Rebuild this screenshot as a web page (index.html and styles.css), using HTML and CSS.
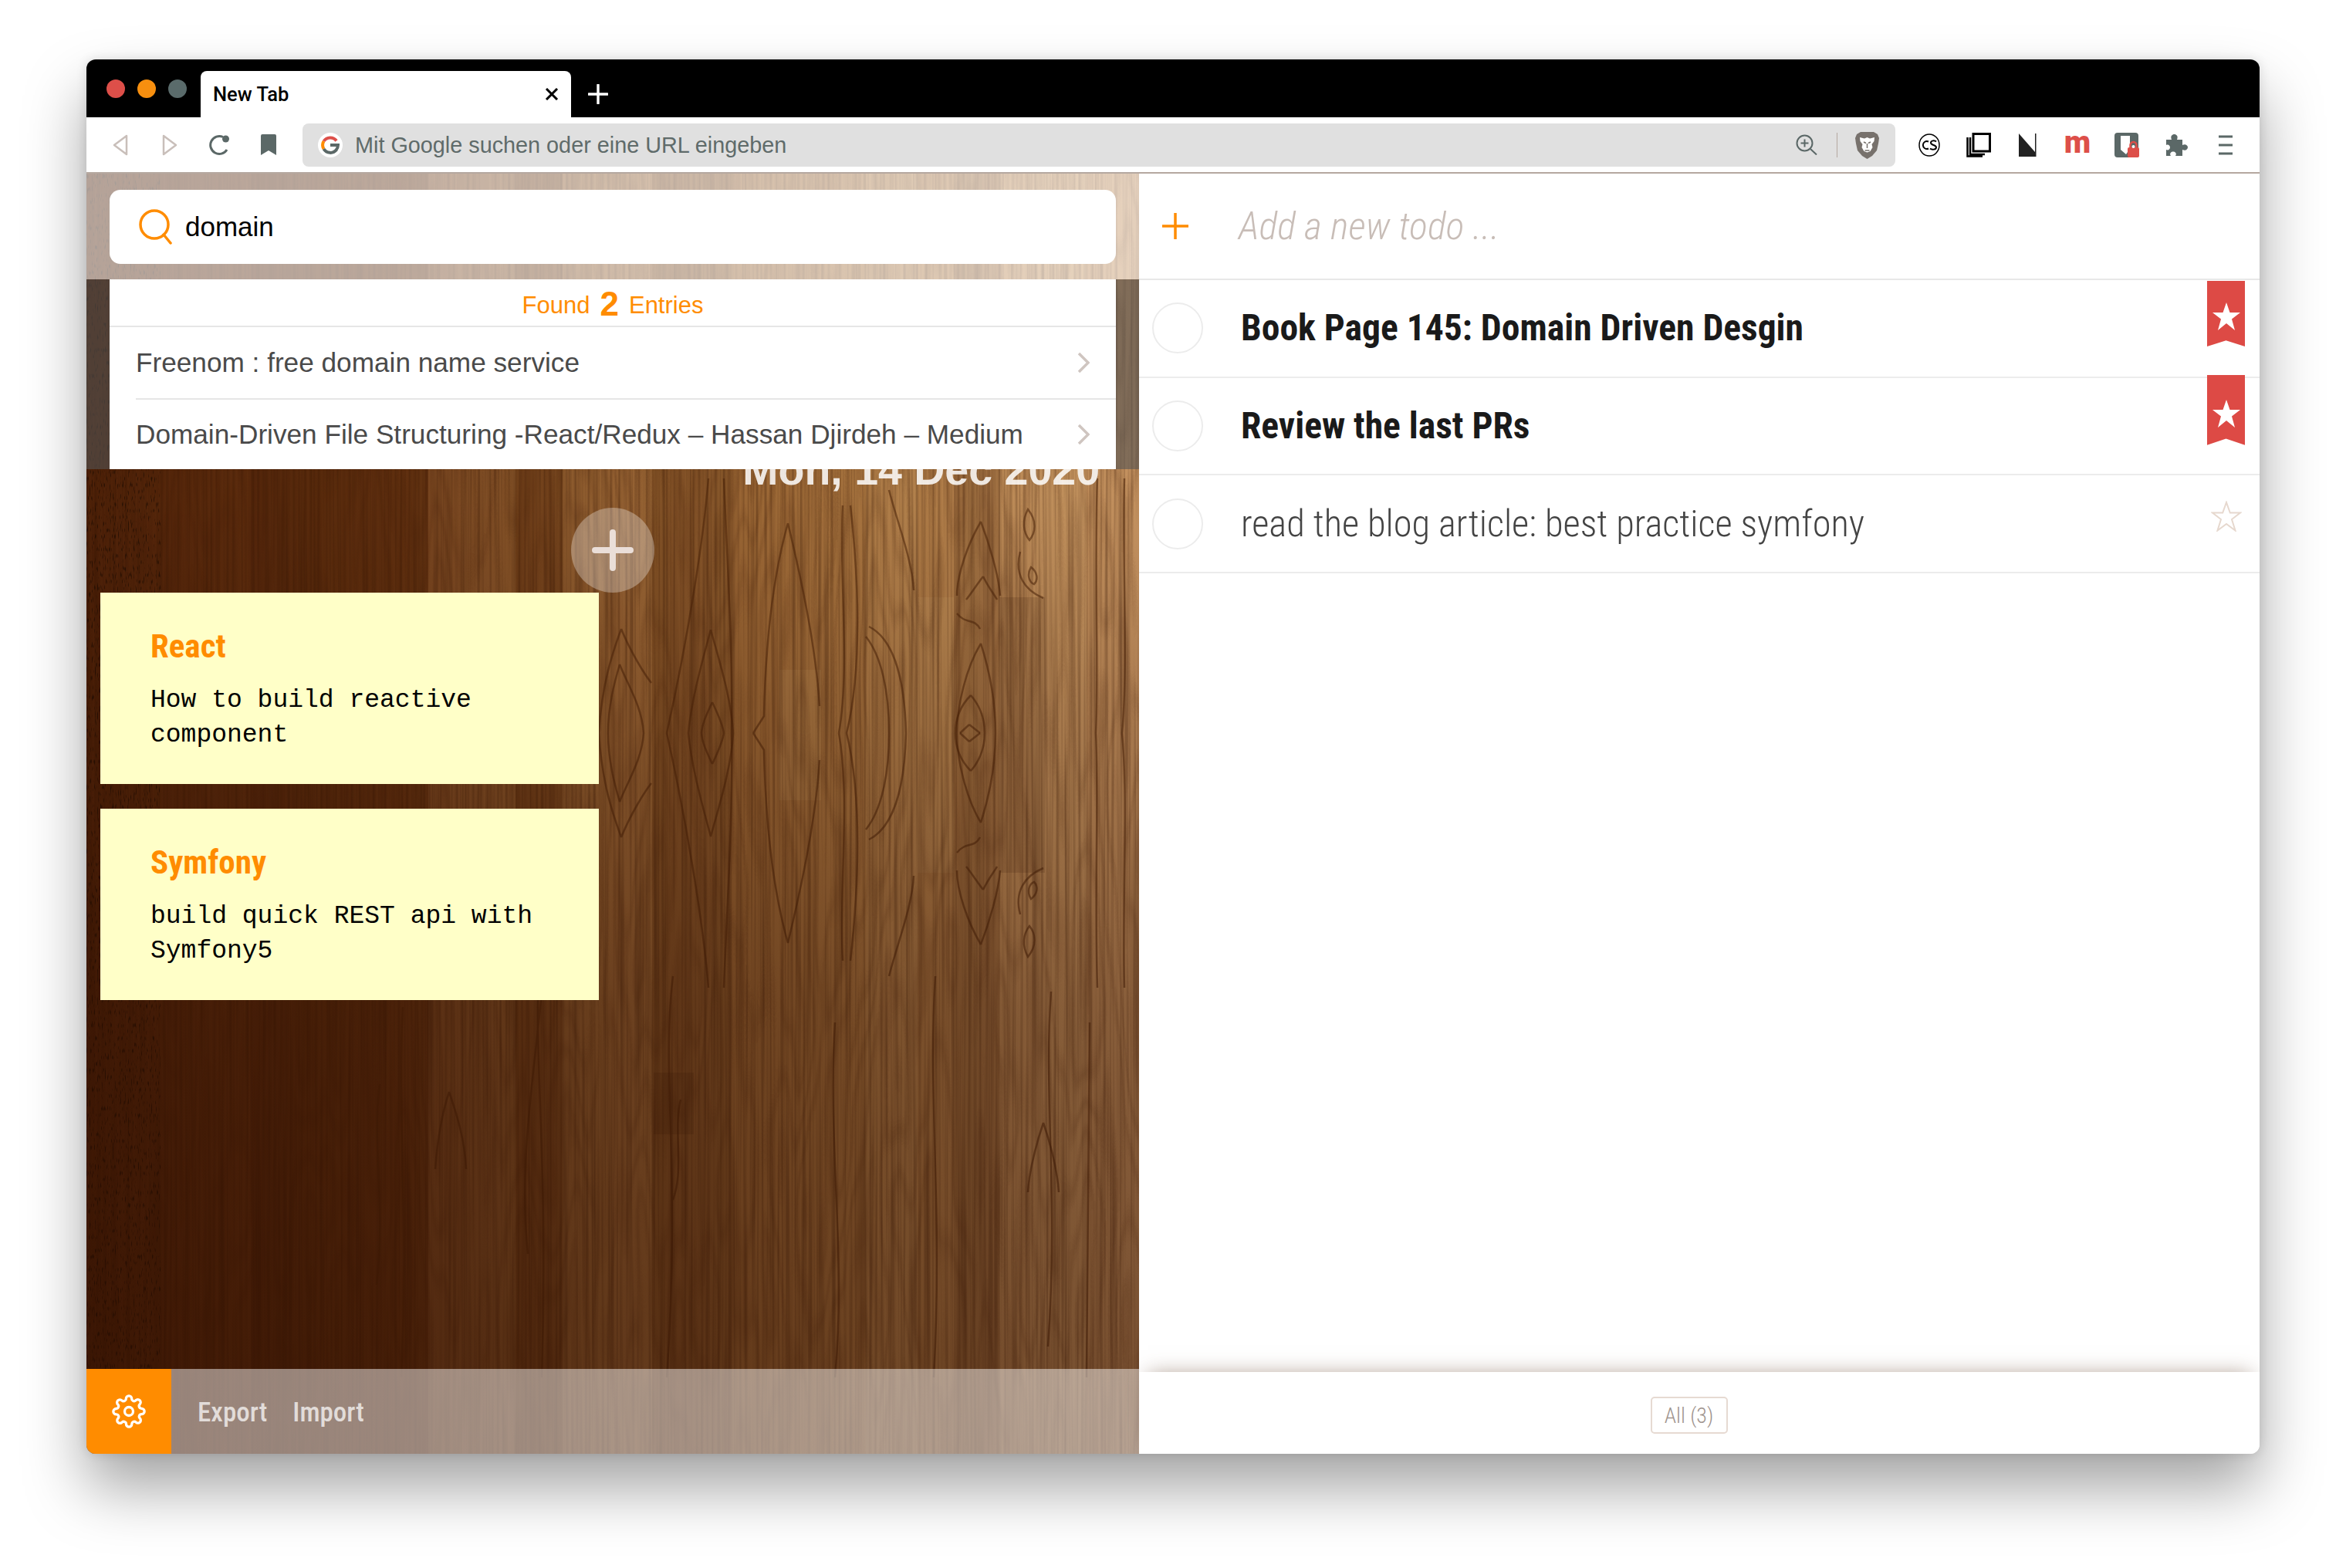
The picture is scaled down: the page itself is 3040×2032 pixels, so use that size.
FILE: index.html
```html
<!DOCTYPE html>
<html lang="en">
<head>
  <meta charset="UTF-8" />
  <title>New Tab</title>
  <link rel="stylesheet" href="styles.css">
</head>
<body>
  <div class="window">
    <div class="titlebar">
      <span class="light light-red"></span>
      <span class="light light-orange"></span>
      <span class="light light-gray"></span>
      <div class="tab">
        <span class="tab-title">New Tab</span>
        <svg class="tab-close" viewBox="0 0 18 16"><path d="M2 1l14 14M16 1L2 15" stroke="#000" stroke-width="3" fill="none"/></svg>
      </div>
      <svg class="tab-new" viewBox="0 0 26 26"><path d="M13 1v24M1 13h24" stroke="#fff" stroke-width="3.4" stroke-linecap="round" fill="none"/></svg>
    </div>

    <div class="toolbar">
      <div class="tool"><svg width="20" height="28" viewBox="0 0 20 28"><path d="M18 2L2 14l16 12z" fill="none" stroke="#c9bfba" stroke-width="2.5" stroke-linejoin="round"/></svg></div>
      <div class="tool"><svg width="20" height="28" viewBox="0 0 20 28"><path d="M2 2l16 12L2 26z" fill="none" stroke="#c9bfba" stroke-width="2.5" stroke-linejoin="round"/></svg></div>
      <div class="tool"><svg width="28" height="27" viewBox="0 0 28 27"><path d="M19 3.5A11.5 11.5 0 1 0 24 20" fill="none" stroke="#5b6867" stroke-width="3"/><circle cx="22.5" cy="6" r="4.5" fill="#5b6867"/></svg></div>
      <div class="tool"><svg width="20" height="27" viewBox="0 0 20 27"><path d="M2 0h16a2 2 0 0 1 2 2v25l-10-6-10 6V2a2 2 0 0 1 2-2z" fill="#5b6867"/></svg></div>

      <div class="urlbar">
        <svg class="g-logo" width="32" height="32" viewBox="0 0 32 32">
          <circle cx="16" cy="16" r="16" fill="#fff"/>
          <path d="M24 10.5A10 10 0 0 0 7.5 11" fill="none" stroke="#dd4f49" stroke-width="4"/>
          <path d="M7.5 11a10 10 0 0 0 0 10" fill="none" stroke="#ff8c00" stroke-width="4"/>
          <path d="M7.5 21A10 10 0 0 0 24 22" fill="none" stroke="#5b6867" stroke-width="4"/>
          <path d="M16 16h10a10 10 0 0 1-2.5 6.5" fill="none" stroke="#5b6867" stroke-width="4"/>
        </svg>
        <span class="url-text">Mit Google suchen oder eine URL eingeben</span>
        <svg class="url-zoom" width="28" height="27" viewBox="0 0 28 27"><circle cx="11.5" cy="11.5" r="10" fill="none" stroke="#5b6867" stroke-width="2"/><path d="M19 19l8 7.5M11.500 6.500v10M6.500 11.500h10" stroke="#5b6867" stroke-width="2" fill="none"/></svg>
        <span class="url-sep"></span>
        <svg class="url-lion" width="31" height="36" viewBox="0 0 31 36">
          <path d="M7 1h17l5 3 2 5-1 7-2 9-6 7-6.500 4L9 32l-6-7-2-9-1-7 2-5z" fill="#77716c"/>
          <path d="M6 8l6 1.500 3.500-1.500L19 9.500 25 8l-.5 5-3 4 1 4-3 5-4 1.500-4-1.500-3-5 1-4-3-4z" fill="#fff"/>
          <path d="M11 14l3 1.500M20 14l-3 1.500M15.500 16v6M12.500 25h6" stroke="#77716c" stroke-width="1.500" fill="none"/>
        </svg>
      </div>

      <div class="tool"><svg width="28" height="30" viewBox="0 0 28 30"><ellipse cx="14" cy="15" rx="13" ry="14" fill="none" stroke="#000" stroke-width="1.500"/><path d="M13 10.500a5 5 0 1 0 0 9" fill="none" stroke="#000" stroke-width="2"/><path d="M23 10.500c-2-2-7-1.500-7 1.500 0 3.500 7 2.500 7 6 0 3-5.500 3.500-8 1.500" fill="none" stroke="#000" stroke-width="2"/></svg></div>
      <div class="tool"><svg width="32" height="32" viewBox="0 0 32 32"><path d="M9 1.500h21.500V24H9z" fill="none" stroke="#000" stroke-width="3"/><path d="M5 6v22h19M1.500 6v24.500H21" fill="none" stroke="#000" stroke-width="2.500"/></svg></div>
      <div class="tool"><svg width="24" height="30" viewBox="0 0 24 30"><path d="M0 0l21 24V0h1.500v30H0z" fill="#222"/></svg></div>
      <div class="tool"><span class="ext-m">m</span></div>
      <div class="tool"><svg width="32" height="32" viewBox="0 0 32 32"><rect width="31" height="32" rx="4" fill="#5b6867"/><path d="M8 4h13v15l-6 9-7-6z" fill="#fff"/><path d="M20 4h3v12h-3z" fill="#5b6867"/><rect x="17" y="19" width="15" height="13" rx="2" fill="#dd4f49"/><path d="M20.500 19v-3a4 4 0 0 1 8 0v3" fill="none" stroke="#dd4f49" stroke-width="2.500"/><circle cx="24.500" cy="18" r="2" fill="#fff"/></svg></div>
      <div class="tool"><svg width="30" height="28" viewBox="0 0 30 28"><path d="M2 7h7c-2-5 1-7 3.500-7S18 2 16 7h7v7c4-2 7 .500 7 3s-3 5-7 3v8H14c2-3 0-5.500-3-5.500S6 25 8 28H2v-8c3 1.500 5-1 5-3s-2-4.500-5-3z" fill="#5b6867"/></svg></div>
      <div class="tool"><svg width="18" height="26" viewBox="0 0 18 26"><path d="M0 2h18M0 13h18M0 24h18" stroke="#5b6867" stroke-width="3" fill="none"/></svg></div>
    </div>

    <div class="content">
      <section class="left">
        <svg class="wood" viewBox="0 0 1364 1659" preserveAspectRatio="none">
          <defs>
            <linearGradient id="woodTone" x1="0" y1="0" x2="1" y2="0">
              <stop offset="0" stop-color="#4e2108"/>
              <stop offset="0.3" stop-color="#683512"/>
              <stop offset="0.5" stop-color="#8a5628"/>
              <stop offset="0.75" stop-color="#a87540"/>
              <stop offset="1" stop-color="#c49260"/>
            </linearGradient>
            <linearGradient id="woodFade" x1="0" y1="0" x2="0" y2="1">
              <stop offset="0.25" stop-color="#2a0c00" stop-opacity="0"/>
              <stop offset="0.65" stop-color="#2a0c00" stop-opacity="0.38"/>
              <stop offset="1" stop-color="#2a0c00" stop-opacity="0.5"/>
            </linearGradient>
            <filter id="grainWide" x="0" y="0" width="100%" height="100%" color-interpolation-filters="sRGB">
              <feTurbulence type="fractalNoise" baseFrequency="0.014 0.0016" numOctaves="3" seed="11"/>
              <feColorMatrix values="0 0 0 0 0.25  0 0 0 0 0.1  0 0 0 0 0.02  1 0 0 0 0"/>
              <feComponentTransfer><feFuncA type="table" tableValues="0 0 0 0 0 0 .5 0 0 .5 0 0 .5 0 0 .5 0 0 .5 0 0 .5 0 0 0 0 0 0"/></feComponentTransfer>
            </filter>
            <filter id="grainFine" x="0" y="0" width="100%" height="100%" color-interpolation-filters="sRGB">
              <feTurbulence type="fractalNoise" baseFrequency="0.28 0.0025" numOctaves="2" seed="3"/>
              <feColorMatrix values="0 0 0 0 0.2  0 0 0 0 0.08  0 0 0 0 0.01  2 0 0 0 -0.8"/>
            </filter>
            <filter id="speck" x="0" y="0" width="100%" height="100%" color-interpolation-filters="sRGB">
              <feTurbulence type="fractalNoise" baseFrequency="0.7 0.12" numOctaves="1" seed="5"/>
              <feColorMatrix values="0 0 0 0 0.05  0 0 0 0 0.02  0 0 0 0 0  6 0 0 0 -3.500"/>
            </filter>
          </defs>
          <rect width="1364" height="1659" fill="url(#woodTone)"/>

          <!-- planks -->
          <rect class="plank-dark" x="213" width="61" height="1659"/>
          <rect class="plank-dark" x="274" width="169" height="1659" opacity="0.04"/>
          <rect class="plank-light" x="443" width="113" height="1659"/>
          <rect class="plank-dark" x="556" width="61" height="1659"/>
          <rect class="plank-light" x="617" width="116" height="1659"/>
          <rect class="plank-dark" x="733" width="103" height="1659"/>
          <rect class="plank-light" x="1010" width="67" height="1659"/>
          <rect class="plank-dark" x="1124" width="60" height="1659"/>
          <rect class="plank-light" x="1183" width="113" height="1659"/>
          <rect class="plank-light" x="898" y="643" width="54" height="169"/>
          <rect class="plank-light" x="1077" y="549" width="47" height="357"/>
          <rect class="plank-dark" x="1184" y="549" width="58" height="357"/>
          <rect class="plank-dark" x="735" y="1165" width="52" height="80"/>

          <rect width="1364" height="1659" filter="url(#grainFine)" opacity="0.42"/>
          <rect width="1364" height="1659" filter="url(#grainWide)" opacity="0.28"/>
          <rect width="96" height="1659" filter="url(#speck)" opacity="0.55"/>

          <!-- knots, the texture mirrors around y=725 -->
          <g id="grainHalf" class="grain-lines">
            <path d="M809 591C800 625 784 680 780 725M809 591C818 625 836 680 838 725"/>
            <path d="M811 685C804 700 798 712 797 725M811 685C818 700 824 712 826 725"/>
            <path d="M806 395C800 470 780 600 752 725M826 395C830 500 838 620 836 725"/>
            <path d="M1159 609C1140 640 1128 690 1128 725M1159 609C1172 650 1178 690 1178 725"/>
            <path d="M1146 676C1132 690 1126 708 1126 725M1146 676C1158 690 1164 708 1164 725"/>
            <path d="M1144 714L1132 725M1144 714L1158 725"/>
            <path d="M1159 451C1142 480 1128 520 1128 547M1159 451C1170 480 1182 520 1184 547"/>
            <path d="M1162 522C1152 535 1146 545 1140 552M1162 522C1168 535 1176 545 1180 552"/>
            <path d="M1128 570C1140 585 1150 575 1158 590"/>
            <path d="M1014 587C1040 600 1060 640 1062 725M1010 600C1030 625 1040 670 1040 725M1040 410C1050 450 1070 500 1072 540"/>
            <path d="M909 453C890 520 880 610 878 703L864 725M909 453C925 520 945 610 950 690"/>
            <path d="M980 430C975 520 990 640 975 725M990 430C1000 520 1006 640 985 725"/>
            <path d="M691 636C684 660 676 690 676 725M691 636C700 660 720 690 722 725"/>
            <path d="M693 590C682 620 668 660 664 725M693 590C705 620 724 650 732 660"/>
            <path d="M1220 435C1212 450 1214 465 1222 475C1230 465 1232 450 1220 435Z"/>
            <path d="M1224 510C1218 520 1222 530 1228 532C1234 526 1232 516 1224 510ZM1210 490C1202 520 1216 540 1240 550"/>
            <path d="M1310 395C1306 520 1312 640 1308 725M1345 395C1342 500 1350 640 1342 725"/>
          </g>
          <use href="#grainHalf" transform="translate(0 1450) scale(1 -1)"/>

          <g class="grain-lines">
            <path d="M590 1000C575 1120 600 1260 590 1560M590 1060C580 1170 560 1280 572 1400"/>
            <path d="M760 1040C745 1160 770 1300 752 1560M770 1200C760 1240 775 1290 760 1330"/>
            <path d="M1100 1040C1090 1200 1110 1340 1098 1560M970 1100C960 1260 985 1400 970 1560"/>
            <path d="M1250 1060C1240 1200 1260 1320 1246 1520M1300 1100L1296 1560"/>
            <path d="M410 1080C402 1220 418 1340 408 1560M380 1180C370 1260 388 1340 376 1440"/>
            <path d="M1240 1230C1230 1260 1222 1290 1220 1320M1240 1230C1250 1260 1258 1290 1260 1320"/>
            <path d="M470 1190C460 1220 455 1250 452 1290M470 1190C480 1220 490 1250 492 1290"/>
          </g>

          <rect width="1364" height="1659" fill="url(#woodFade)"/>
        </svg>

        <div class="search-head">
          <div class="search-box">
            <svg width="46" height="46" viewBox="0 0 46 46"><circle cx="21" cy="20" r="18" fill="none" stroke="#ff8c00" stroke-width="3.500"/><path d="M33 33l9 11" stroke="#ff8c00" stroke-width="3.500" stroke-linecap="round"/></svg>
            <span class="search-term">domain</span>
          </div>
        </div>

        <div class="results">
          <div class="results-inner">
            <div class="results-count">Found <b>2</b> Entries</div>
            <div class="result">
              <span>Freenom : free domain name service</span>
              <svg width="16" height="28" viewBox="0 0 16 28"><path d="M2 2l12 12L2 26" fill="none" stroke="#cfc5c0" stroke-width="3.500"/></svg>
            </div>
            <div class="result">
              <span>Domain-Driven File Structuring -React/Redux – Hassan Djirdeh – Medium</span>
              <svg width="16" height="28" viewBox="0 0 16 28"><path d="M2 2l12 12L2 26" fill="none" stroke="#cfc5c0" stroke-width="3.500"/></svg>
            </div>
          </div>
        </div>

        <div class="board">
          <div class="board-date">Mon, 14 Dec 2020</div>
          <div class="board-add"><svg width="54" height="54" viewBox="0 0 54 54"><path d="M27 4v46M4 27h46" stroke="#eaded8" stroke-width="8" stroke-linecap="round" fill="none"/></svg></div>
          <div class="notes">
            <article class="note">
              <h2>React</h2>
              <p>How to build reactive<br>component</p>
            </article>
            <article class="note">
              <h2>Symfony</h2>
              <p>build quick REST api with<br>Symfony5</p>
            </article>
          </div>
        </div>

        <div class="left-footer">
          <div class="settings-btn"><svg width="44" height="44" viewBox="0 0 24 24" fill="none" stroke="#fff" stroke-width="1.800" stroke-linejoin="round"><circle cx="12" cy="12" r="3"/><path d="M19.4 15a1.65 1.65 0 0 0 .33 1.82l.06.06a2 2 0 0 1 0 2.83 2 2 0 0 1-2.83 0l-.06-.06a1.65 1.65 0 0 0-1.82-.33 1.65 1.65 0 0 0-1 1.51V21a2 2 0 0 1-2 2 2 2 0 0 1-2-2v-.09A1.65 1.65 0 0 0 9 19.4a1.65 1.65 0 0 0-1.82.33l-.06.06a2 2 0 0 1-2.83 0 2 2 0 0 1 0-2.83l.06-.06a1.65 1.65 0 0 0 .33-1.82 1.65 1.65 0 0 0-1.51-1H3a2 2 0 0 1-2-2 2 2 0 0 1 2-2h.09A1.65 1.65 0 0 0 4.600 9a1.65 1.65 0 0 0-.33-1.82l-.06-.06a2 2 0 0 1 0-2.83 2 2 0 0 1 2.83 0l.06.06a1.65 1.65 0 0 0 1.82.33H9a1.65 1.65 0 0 0 1-1.51V3a2 2 0 0 1 2-2 2 2 0 0 1 2 2v.09a1.65 1.65 0 0 0 1 1.51 1.65 1.65 0 0 0 1.82-.33l.06-.06a2 2 0 0 1 2.83 0 2 2 0 0 1 0 2.83l-.06.06a1.65 1.65 0 0 0-.33 1.82V9a1.65 1.65 0 0 0 1.51 1H21a2 2 0 0 1 2 2 2 2 0 0 1-2 2h-.09a1.65 1.65 0 0 0-1.51 1z"/></svg></div>
          <a class="footer-link">Export</a>
          <a class="footer-link">Import</a>
        </div>
      </section>

      <section class="right">
        <div class="add-row">
          <svg width="34" height="34" viewBox="0 0 34 34"><path d="M17 0v34M0 17h34" stroke="#ff8c00" stroke-width="3.500" fill="none"/></svg>
          <span class="add-text">Add a new todo ...</span>
        </div>
        <div class="todo todo-starred">
          <span class="todo-check"></span>
          <span class="todo-text">Book Page 145: Domain Driven Desgin</span>
          <div class="ribbon ribbon-first"><svg width="36" height="36" viewBox="0 0 36 36"><path d="M18 0l4.500 13H36l-11 8.500L29 36 18 27 7 36l4-14.500L0 13h13.500z" fill="#fff"/></svg></div>
        </div>
        <div class="todo todo-starred">
          <span class="todo-check"></span>
          <span class="todo-text">Review the last PRs</span>
          <div class="ribbon ribbon-second"><svg width="36" height="36" viewBox="0 0 36 36"><path d="M18 0l4.500 13H36l-11 8.500L29 36 18 27 7 36l4-14.500L0 13h13.500z" fill="#fff"/></svg></div>
        </div>
        <div class="todo">
          <span class="todo-check"></span>
          <span class="todo-text">read the blog article: best practice symfony</span>
          <svg class="star-empty" width="40" height="40" viewBox="0 0 40 40"><path d="M20 2l4.800 13.500H38l-11 8.500 4.500 14.500L20 30 8.500 38.500 13 24 2 15.500h13.200z" fill="none" stroke="#e6d8ce" stroke-width="2"/></svg>
        </div>
        <div class="todo-space"></div>
        <div class="right-footer">
          <span class="filter-btn">All (3)</span>
        </div>
      </section>
    </div>
  </div>
</body>
</html>
```

FILE: styles.css
```css
html, body {
  margin: 0;
  padding: 0;
}

body {
  background: #fff;
  width: 3040px;
  height: 2032px;
  overflow: hidden;
  font-family: 'Liberation Sans', Arial, sans-serif;
}

.window {
  margin: 77px 0 0 112px;
  width: 2816px;
  height: 1807px;
  display: flex;
  flex-direction: column;
  border-radius: 12px;
  overflow: hidden;
  box-shadow: 0 44px 80px rgba(0, 0, 0, 0.36), 0 0 14px rgba(0, 0, 0, 0.12);
  background: #fff;
}

/* title bar */
.titlebar {
  height: 75px;
  flex: none;
  background: #000;
  display: flex;
  align-items: flex-start;
  padding-left: 26px;
  gap: 16px;
}

.light {
  width: 24px;
  height: 24px;
  border-radius: 50%;
  margin-top: 26px;
}

.light-red { background: #dd4f49; }
.light-orange { background: #f78f0f; }
.light-gray { background: #5a6b6b; }

.tab {
  margin: 15px 0 0 2px;
  width: 480px;
  height: 60px;
  background: #fff;
  border-radius: 8px 8px 0 0;
  display: flex;
  align-items: center;
  justify-content: space-between;
  padding: 0 16px 0 16px;
  box-sizing: border-box;
}

.tab-title {
  font: 500 25.500px Roboto, sans-serif;
  color: #000;
}

.tab-close {
  width: 18px;
  height: 16px;
}

.tab-new {
  width: 26px;
  height: 26px;
  margin: 32px 0 0 6px;
}

/* toolbar */
.toolbar {
  height: 71px;
  flex: none;
  display: flex;
  align-items: center;
  padding: 0 12px;
  border-bottom: 2px solid #b5a8a0;
  background: #fff;
}

.tool {
  width: 64px;
  height: 100%;
  flex: none;
  display: flex;
  align-items: center;
  justify-content: center;
}

.urlbar {
  flex: 1;
  height: 56px;
  margin: 0 12px;
  background: #e0e0e0;
  border-radius: 8px;
  display: flex;
  align-items: center;
  padding: 0 21px 0 20px;
}

.g-logo {
  flex: none;
}

.url-text {
  flex: 1;
  margin: 1px 0 0 16px;
  font-size: 28.800px;
  color: #5f6b6a;
}

.url-sep {
  width: 1px;
  height: 32px;
  background: #b5a8a0;
  margin: 0 23px 0 25px;
}

.ext-m {
  font: 900 40px/1 Roboto, sans-serif;
  color: #dd4f49;
  margin-top: -6px;
}

/* left panel */
.content {
  flex: 1;
  display: flex;
  min-height: 0;
}

.left {
  width: 1364px;
  flex: none;
  position: relative;
  display: flex;
  flex-direction: column;
  overflow: hidden;
}

.wood {
  position: absolute;
  top: 0;
  left: 0;
  width: 100%;
  height: 100%;
}

.plank-dark {
  fill: #2a0c00;
  opacity: 0.14;
}

.plank-light {
  fill: #ffdcae;
  opacity: 0.07;
}

.grain-lines {
  fill: none;
  stroke: #4a2208;
  stroke-width: 2.500;
  stroke-opacity: 0.55;
}

.search-head {
  position: relative;
  height: 137px;
  flex: none;
  box-sizing: border-box;
  padding: 21px 30px 0;
  background: rgba(255, 255, 255, 0.59);
}

.search-box {
  height: 96px;
  background: #fff;
  border-radius: 14px;
  display: flex;
  align-items: center;
  padding-left: 37px;
  gap: 15px;
}

.search-term {
  font-size: 35px;
  color: #000;
}

.results {
  position: absolute;
  top: 137px;
  left: 0;
  right: 0;
  height: 246px;
  padding: 0 30px;
  background: rgba(85, 85, 85, 0.6);
  z-index: 2;
}

.results-inner {
  background: #fff;
  height: 100%;
}

.results-count {
  height: 62px;
  box-sizing: border-box;
  padding-top: 8px;
  border-bottom: 2px solid #e6e6e6;
  display: flex;
  align-items: center;
  justify-content: center;
  gap: 13px;
  font-size: 31px;
  color: #ff8c00;
}

.results-count b {
  font-size: 44px;
  margin-top: -4px;
}

.result {
  height: 92px;
  margin-left: 34px;
  box-sizing: border-box;
  display: flex;
  align-items: center;
  justify-content: space-between;
  padding-right: 34px;
  font-size: 35.200px;
  color: #4a4a4a;
}

.result + .result {
  border-top: 2px solid #e6e6e6;
}

.board {
  position: relative;
  flex: 1;
  padding: 217px 18px 0;
}

.board-date {
  text-align: right;
  padding-right: 33px;
  font-size: 55.500px;
  line-height: 60px;
  font-weight: bold;
  color: rgba(255, 255, 255, 0.85);
}

.board-add {
  width: 108px;
  height: 110px;
  margin: 19px auto 0;
  border-radius: 50%;
  background: rgba(255, 255, 255, 0.3);
  display: flex;
  align-items: center;
  justify-content: center;
}

.notes {
  width: 646px;
  display: flex;
  flex-direction: column;
  gap: 32px;
}

.note {
  height: 248px;
  box-sizing: border-box;
  padding: 42px 40px 0 65px;
  background: #ffffc8;
}

.note h2 {
  margin: 0;
  font: 700 43px/54px Roboto, sans-serif;
  font-stretch: 75%;
  color: #ff8c00;
}

.note p {
  margin: 22px 0 0;
  font-family: 'Liberation Mono', monospace;
  font-size: 33px;
  line-height: 44.500px;
  color: #000;
}

.left-footer {
  position: relative;
  height: 110px;
  flex: none;
  display: flex;
  align-items: center;
  background: rgba(255, 255, 255, 0.47);
}

.settings-btn {
  width: 110px;
  height: 100%;
  background: #ff8c00;
  display: flex;
  align-items: center;
  justify-content: center;
  margin-right: 34px;
}

.footer-link {
  font: 500 35px Roboto, sans-serif;
  font-stretch: 75%;
  color: rgba(255, 255, 255, 0.72);
  margin: 3px 33px 0 0;
}

/* right panel */
.right {
  flex: 1;
  display: flex;
  flex-direction: column;
  min-width: 0;
}

.add-row {
  height: 138px;
  flex: none;
  box-sizing: border-box;
  display: flex;
  align-items: center;
  padding-left: 30px;
  gap: 65px;
  border-bottom: 2px solid #e8e8e8;
}

.add-text {
  font: italic 300 50px Roboto, sans-serif;
  font-stretch: 75%;
  color: #c8bdb7;
}

.todo {
  height: 126.670px;
  flex: none;
  box-sizing: border-box;
  position: relative;
  display: flex;
  align-items: center;
  padding-left: 17px;
  border-bottom: 2px solid #ececec;
}

.todo-check {
  width: 62px;
  height: 62px;
  border: 2px solid #ececec;
  border-radius: 50%;
  flex: none;
}

.todo-text {
  margin-left: 49px;
  font: 300 48.400px Roboto, sans-serif;
  font-stretch: 75%;
  color: #444;
}

.todo-starred .todo-text {
  font-size: 47.600px;
  font-weight: 700;
  color: #1a1a1a;
}

.ribbon {
  position: absolute;
  right: 19px;
  width: 49px;
  display: flex;
  justify-content: center;
  padding-top: 28px;
  box-sizing: border-box;
  background: #dd4a45;
  clip-path: polygon(0 0, 100% 0, 100% 100%, 50% 91%, 0 100%);
}

.ribbon-first {
  top: 1px;
  height: 85px;
}

.ribbon-second {
  top: -4px;
  height: 91px;
  padding-top: 32px;
}

.star-empty {
  position: absolute;
  right: 23px;
  top: 33px;
}

.todo-space {
  flex: 1;
}

.right-footer {
  height: 106px;
  flex: none;
  display: flex;
  align-items: center;
  justify-content: center;
  background: #fff;
  box-shadow: 0 -8px 26px -12px rgba(120, 90, 70, 0.65);
  position: relative;
}

.filter-btn {
  width: 100px;
  height: 48px;
  box-sizing: border-box;
  border: 2px solid #e6dad2;
  border-radius: 5px;
  display: flex;
  align-items: center;
  justify-content: center;
  font: 300 28px Roboto, sans-serif;
  font-stretch: 75%;
  color: #a0948e;
  margin: 6px 27px 0 0;
}
```
